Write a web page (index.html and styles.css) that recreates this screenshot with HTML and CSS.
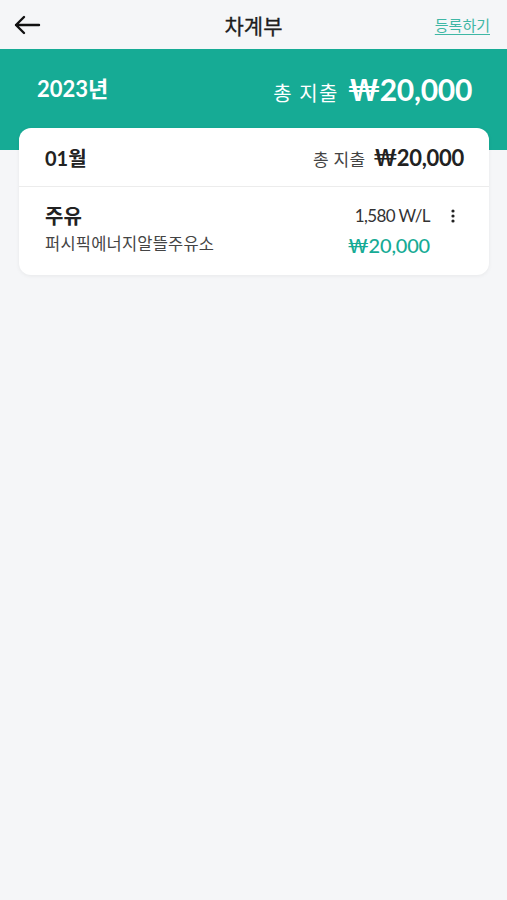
FILE: index.html
```html
<!DOCTYPE html>
<html lang="ko">
<head>
<meta charset="utf-8">
<link rel="stylesheet" href="styles.css">
</head>
<body>
<header class="topbar">
  <span class="back">
    <svg width="28" height="20" viewBox="0 0 28 20"><path d="M26 10H3M11 2L3 10l8 8" fill="none" stroke="#111" stroke-width="2.4" stroke-linecap="round" stroke-linejoin="round"/></svg>
  </span>
  <h1 class="title">차계부</h1>
  <a class="register">등록하기</a>
</header>
<section class="band">
  <div class="year">2023년</div>
  <div class="band-total"><span class="label">총 지출</span><span class="amount">₩20,000</span></div>
</section>
<main class="content">
  <div class="card">
    <div class="card-head">
      <div class="month">01월</div>
      <div class="month-total"><span class="label">총 지출</span><span class="amount">₩20,000</span></div>
    </div>
    <div class="item">
      <div class="item-left">
        <div class="item-title">주유</div>
        <div class="item-place">퍼시픽에너지알뜰주유소</div>
      </div>
      <div class="item-right">
        <div class="price">1,580 W/L</div>
        <div class="cost">₩20,000</div>
      </div>
      <div class="more">
        <svg width="4" height="14" viewBox="0 0 4 14"><circle cx="2" cy="2" r="1.6" fill="#222"/><circle cx="2" cy="7" r="1.6" fill="#222"/><circle cx="2" cy="12" r="1.6" fill="#222"/></svg>
      </div>
    </div>
  </div>
</main>
</body>
</html>
```
FILE: styles.css
```css
* { box-sizing: border-box; }
html, body { margin: 0; padding: 0; }
body {
  width: 507px;
  height: 900px;
  background: #f5f6f8;
  font-family: Lato, "Noto Sans CJK KR", sans-serif;
  color: #222;
}
.topbar {
  height: 49px;
  display: flex;
  align-items: center;
  justify-content: space-between;
  padding: 0 17px 0 13px;
  position: relative;
}
.back { display: flex; width: 28px; }
.title {
  position: absolute;
  left: 0; right: 0;
  text-align: center;
  margin: 0;
  font-family: "Noto Sans CJK KR", sans-serif;
  font-size: 21px;
  font-weight: 400;
  color: #1e1e1e;
  -webkit-text-stroke: 0.3px #1e1e1e;
  pointer-events: none;
}
.register {
  font-family: "Noto Sans CJK KR", sans-serif;
  font-size: 15px;
  color: #3fb7a5;
  text-decoration: underline;
  text-underline-offset: 3px;
  position: relative;
}
.band {
  background: #16ab95;
  height: 101px;
  display: flex;
  justify-content: space-between;
  align-items: flex-start;
  padding: 22px 35px 0 37px;
  color: #fff;
}
.year { font-size: 22px; font-weight: 700; margin-top: 0; }
.band-total { display: flex; align-items: baseline; gap: 9px; }
.band-total .label { font-size: 20px; font-weight: 400; letter-spacing: 1.3px; }
.band-total .amount { font-size: 30px; font-weight: 700; letter-spacing: -0.3px; }
.content { padding: 0 18px 0 19px; margin-top: -22px; }
.card {
  background: #fff;
  border-radius: 12px;
  box-shadow: 0 1px 4px rgba(0,0,0,0.06);
}
.card-head {
  height: 59px;
  display: flex;
  justify-content: space-between;
  align-items: center;
  padding: 0 25px 0 26px;
  border-bottom: 1px solid #ececec;
}
.month { font-size: 20px; font-weight: 700; color: #222; }
.month-total { display: flex; align-items: baseline; gap: 8px; }
.month-total .label { font-size: 17px; color: #444; letter-spacing: 0.3px; }
.month-total .amount { font-size: 22px; font-weight: 700; color: #222; letter-spacing: -0.3px; }
.item {
  height: 88px;
  display: flex;
  align-items: flex-start;
  padding: 15px 25px 0 26px;
}
.item-left { flex: 1; }
.item-title { font-size: 20px; font-weight: 700; color: #222; line-height: 28px; }
.item-place { font-size: 16.5px; color: #444; line-height: 24px; margin-top: 2px; letter-spacing: 0.2px; }
.item-right { text-align: right; }
.price { font-size: 17px; color: #333; line-height: 28px; letter-spacing: -0.6px; }
.cost { font-size: 20px; font-weight: 500; color: #16ab95; line-height: 30px; letter-spacing: -0.2px; }
.more { width: 34px; display: flex; justify-content: flex-end; padding-top: 7px; padding-right: 9px; }
```
